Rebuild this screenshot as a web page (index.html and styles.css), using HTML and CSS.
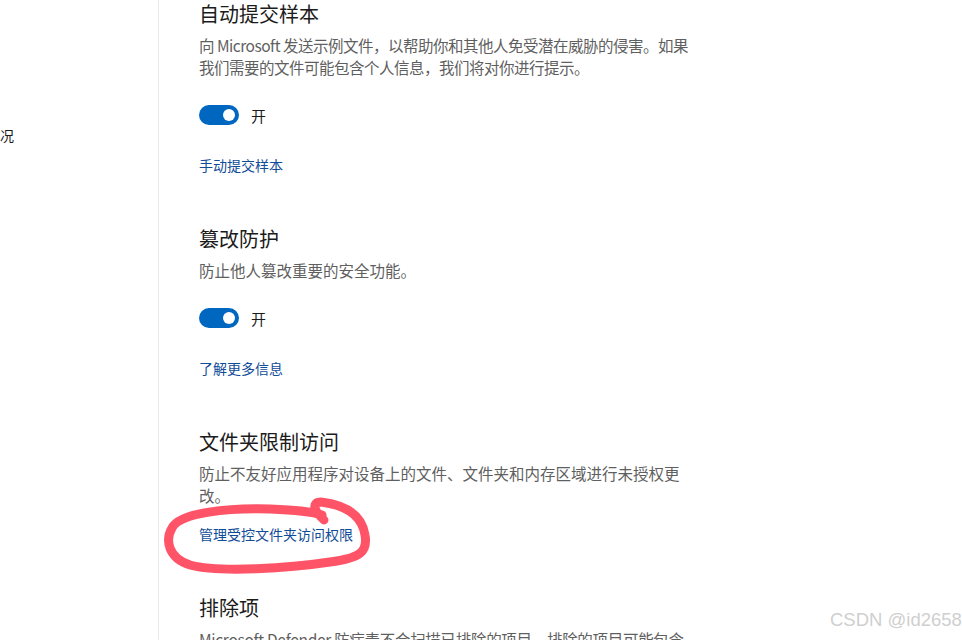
FILE: index.html
```html
<!DOCTYPE html>
<html lang="zh-CN">
<head>
    <meta charset="UTF-8">
    <meta name="viewport" content="width=device-width, initial-scale=1.0">
    <title>病毒和威胁防护设置</title>
    <link rel="stylesheet" href="styles.css">
</head>
<body>
    <div class="app">
        <nav class="sidebar">
            <div class="nav-item">况</div>
        </nav>
        <main class="content">
            <section class="setting">
                <h2>自动提交样本</h2>
                <p class="desc desc-tight">向 Microsoft 发送示例文件，以帮助你和其他人免受潜在威胁的侵害。如果我们需要的文件可能包含个人信息，我们将对你进行提示。</p>
                <div class="toggle-row">
                    <span class="toggle on"><span class="knob"></span></span>
                    <span class="toggle-label">开</span>
                </div>
                <a class="link" href="#">手动提交样本</a>
            </section>
            <section class="setting">
                <h2>篡改防护</h2>
                <p class="desc">防止他人篡改重要的安全功能。</p>
                <div class="toggle-row">
                    <span class="toggle on"><span class="knob"></span></span>
                    <span class="toggle-label">开</span>
                </div>
                <a class="link" href="#">了解更多信息</a>
            </section>
            <section class="setting">
                <h2>文件夹限制访问</h2>
                <p class="desc">防止不友好应用程序对设备上的文件、文件夹和内存区域进行未授权更改。</p>
                <a class="link link-tight" href="#">管理受控文件夹访问权限</a>
            </section>
            <section class="setting">
                <h2>排除项</h2>
                <p class="desc desc-snug">Microsoft Defender 防病毒不会扫描已排除的项目。排除的项目可能包含使你的设备易受攻击的威胁。</p>
            </section>
        </main>
    </div>

    <!-- hand-drawn highlight over the link -->
    <svg class="scribble" width="962" height="640" viewBox="0 0 962 640">
        <path d="M324 520 C314 511, 311 502, 321 502 C345 505, 362 515, 365 535 C368 552, 360 558, 330 562 C290 568, 220 573, 190 565 C168 558, 165 540, 172 528 C180 512, 230 508, 270 509 C295 510, 310 511, 322 515"
              fill="none" stroke="#ff5468" stroke-width="9" stroke-linecap="round" stroke-linejoin="round"/>
    </svg>

    <div class="watermark">CSDN @id2658</div>
</body>
</html>
```

FILE: styles.css
```css
body {
    margin: 0;
    font-family: "Noto Sans", "Noto Sans CJK SC", sans-serif;
    background: #fff;
    color: #1b1b1b;
    overflow: hidden;
}
.app {
    display: flex;
    height: 640px;
}
.sidebar {
    width: 158px;
    flex-shrink: 0;
    border-right: 1px solid #e8e8e8;
    padding-top: 126px;
}
.nav-item {
    font-size: 14px;
    line-height: 20px;
    color: #1b1b1b;
}
.content {
    padding: 1px 0 0 40px;
}
.setting {
    width: 496px;
    margin-bottom: 50px;
}
.setting h2 {
    margin: 0;
    font-size: 20px;
    font-weight: 400;
    line-height: 28px;
    color: #1b1b1b;
}
.desc {
    margin: 5px 0 0;
    font-family: "Noto Sans CJK SC", "Noto Sans", sans-serif;
    font-size: 15.5px;
    line-height: 22px;
    color: #5f5f5f;
}
.desc-tight {
    letter-spacing: -0.5px;
}
.desc-snug {
    letter-spacing: -0.3px;
}
.toggle-row {
    display: flex;
    align-items: center;
    gap: 12px;
    margin-top: 27px;
    height: 20px;
}
.toggle {
    width: 40px;
    height: 20px;
    border-radius: 10px;
    background: #0067c0;
    display: flex;
    align-items: center;
    justify-content: flex-end;
    padding-right: 4px;
    box-sizing: border-box;
}
.knob {
    width: 12px;
    height: 12px;
    border-radius: 50%;
    background: #fff;
}
.toggle-label {
    font-size: 15px;
    color: #1b1b1b;
}
.link {
    display: block;
    margin-top: 31px;
    font-size: 14px;
    line-height: 20px;
    color: #104c97;
    text-decoration: none;
}
.link-tight {
    margin-top: 19px;
}
.scribble {
    position: absolute;
    left: 0;
    top: 0;
    pointer-events: none;
}
.watermark {
    position: absolute;
    left: 830px;
    top: 609px;
    font-family: "Liberation Sans", Arial, sans-serif;
    font-size: 18.5px;
    color: #cfcfcf;
    white-space: nowrap;
    text-shadow: 0 0 1px #fff;
}
```
